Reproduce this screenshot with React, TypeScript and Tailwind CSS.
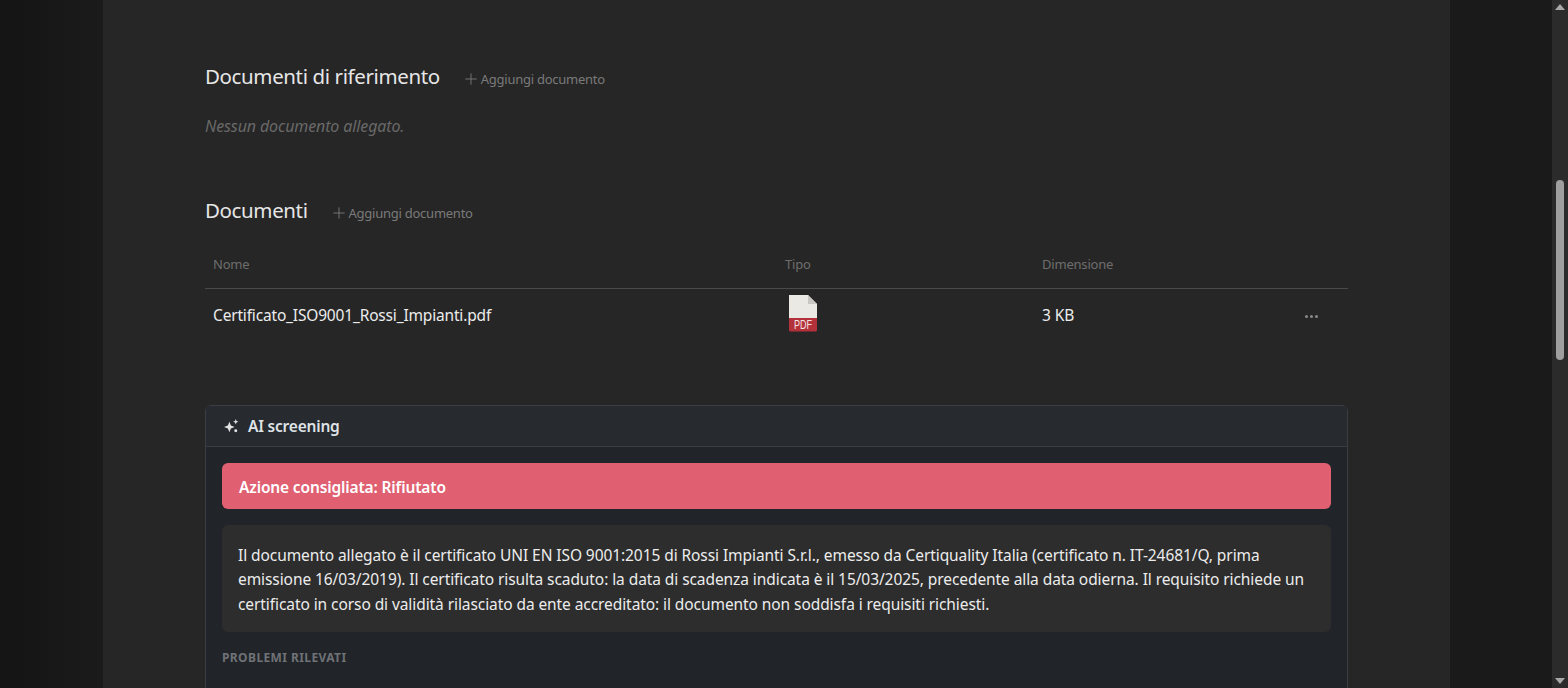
import { Plus } from "lucide-react";

const font = { fontFamily: '"Noto Sans", "Open Sans", sans-serif' };

function SectionTitle({ title }: { title: string }) {
  return (
    <div className="flex items-center">
      <h2 className="text-[20.5px] leading-[28px] font-normal text-[#e6e6e6] tracking-[-0.38px]">{title}</h2>
      <button type="button" className="ml-[22px] mt-[6px] flex items-center text-[13px] leading-[18px] text-[#7a7a7a] tracking-[-0.25px]">
        <Plus size={18} strokeWidth={1.2} className="mr-[1px]" />
        Aggiungi documento
      </button>
    </div>
  );
}

function PdfIcon() {
  return (
    <svg width="30" height="38" viewBox="0 0 30 38">
      <path d="M1 1h19l9 9v14H1z" fill="#ebe9e3" />
      <path d="M20 1l9 9h-9z" fill="#c9c7c1" />
      <path d="M1 24h28v12a1.5 1.5 0 0 1-1.5 1.5h-25A1.5 1.5 0 0 1 1 36z" fill="#b3313a" />
      <text x="15" y="35" textAnchor="middle" fontSize="12" textLength="18" lengthAdjust="spacingAndGlyphs" fill="#f3e4e4" fontFamily="Liberation Sans, sans-serif">PDF</text>
    </svg>
  );
}

function Sparkles() {
  return (
    <svg width="17" height="17" viewBox="0 0 16 16" fill="#e4e4e4">
      <path d="M6 3.5l1.4 3.6L11 8.5 7.4 9.9 6 13.5 4.6 9.9 1 8.5l3.6-1.4z" />
      <path d="M12 1l.7 1.8 1.8.7-1.8.7L12 6l-.7-1.8-1.8-.7 1.8-.7z" />
      <circle cx="12" cy="12" r="1.4" />
    </svg>
  );
}

export default function App() {
  return (
    <div className="flex h-[688px] w-full overflow-hidden bg-[#1a1a1a]" style={font}>
      <div className="w-[103px] shrink-0 bg-gradient-to-r from-[#141414] to-[#1b1b1b]" />
      <main className="w-[1347px] shrink-0 overflow-hidden bg-[#262626] px-[102px] pt-[62px]">
        <SectionTitle title="Documenti di riferimento" />
        <p className="mt-[25px] text-[16px] leading-[22px] italic text-[#696969] tracking-[-0.12px]">Nessun documento allegato.</p>

        <div className="mt-[59px]">
          <SectionTitle title="Documenti" />
        </div>

        <table className="mt-[21px] w-full table-fixed border-collapse">
          <thead>
            <tr className="h-[43px] border-b border-[#4a4a4a] text-left text-[13px] text-[#6e6e6e]">
              <th className="w-[572px] pb-[4px] pl-[8px] font-normal tracking-[-0.2px]">Nome</th>
              <th className="w-[257px] pb-[4px] pl-[8px] font-normal tracking-[-0.2px]">Tipo</th>
              <th className="pb-[4px] pl-[8px] font-normal tracking-[-0.2px]">Dimensione</th>
              <th className="w-[60px]" />
            </tr>
          </thead>
          <tbody>
            <tr className="h-[54px] text-[15.5px] text-[#ececec]">
              <td className="pl-[8px] tracking-[-0.17px]">Certificato_ISO9001_Rossi_Impianti.pdf</td>
              <td className="pl-[11px]"><div className="flex -translate-y-[2px]"><PdfIcon /></div></td>
              <td className="pl-[8px] tracking-[-0.1px]">3 KB</td>
              <td>
                <div className="ml-[17px] flex gap-[2px] pt-[2px]">
                  <span className="size-[3px] rounded-full bg-[#8a8a8a]" />
                  <span className="size-[3px] rounded-full bg-[#8a8a8a]" />
                  <span className="size-[3px] rounded-full bg-[#8a8a8a]" />
                </div>
              </td>
            </tr>
          </tbody>
        </table>

        <section className="mt-[63px] rounded-t-[6px] border border-[#3a3d42] bg-[#212429]">
          <header className="flex h-[41px] items-center border-b border-[#3a3d42] bg-[#272a2f] px-[17px]">
            <Sparkles />
            <span className="ml-[8px] pt-[2px] text-[15.5px] font-semibold text-[#dfe3e6] tracking-[-0.2px]">AI screening</span>
          </header>
          <div className="px-[16px] pt-[16px] pb-[60px]">
            <div className="flex h-[46px] items-center rounded-[6px] bg-[#e06072] px-[17px] pt-[3px] text-[15.5px] font-semibold text-white tracking-[-0.14px]">
              Azione consigliata: Rifiutato
            </div>
            <div className="mt-[16px] rounded-[6px] bg-[#2d2d2d] px-[16px] pt-[17.5px] pb-[15.5px] text-[15.5px] leading-[24.5px] text-[#ececec] tracking-[-0.08px]">
              Il documento allegato è il certificato UNI EN ISO 9001:2015 di Rossi Impianti S.r.l., emesso da Certiquality Italia (certificato n. IT-24681/Q, prima emissione 16/03/2019). Il certificato risulta scaduto: la data di scadenza indicata è il 15/03/2025, precedente alla data odierna. Il requisito richiede un certificato in corso di validità rilasciato da ente accreditato: il documento non soddisfa i requisiti richiesti.
            </div>
            <h3 className="mt-[17px] text-[12px] leading-[18px] font-bold text-[#6f7276] tracking-[0.4px]">PROBLEMI RILEVATI</h3>
          </div>
        </section>
      </main>
      <div className="flex-1" />
      <div className="flex w-[16px] shrink-0 flex-col items-center justify-between bg-[#2b2b2b] py-[4px]">
        <div className="h-0 w-0 border-x-[5px] border-b-[6px] border-x-transparent border-b-[#a8a8a8]" />
        <div className="h-0 w-0 border-x-[5px] border-t-[6px] border-x-transparent border-t-[#a8a8a8]" />
      </div>
      <div className="absolute right-[4px] top-[180px] h-[180px] w-[8px] rounded-full bg-[#9f9f9f]" />
    </div>
  );
}
